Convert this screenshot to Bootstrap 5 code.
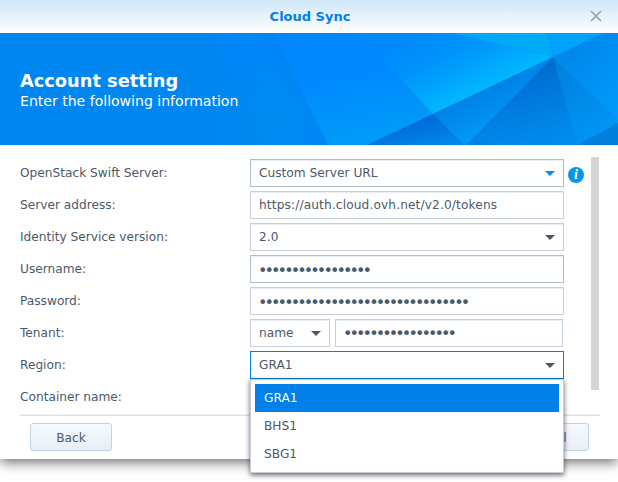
<!DOCTYPE html>
<html lang="en">
<head>
<meta charset="utf-8">
<meta name="viewport" content="width=device-width, initial-scale=1">
<title>Cloud Sync</title>
<link href="https://cdn.jsdelivr.net/npm/bootstrap@5.3.0/dist/css/bootstrap.min.css" rel="stylesheet">
<style>
body{font-family:"DejaVu Sans",Verdana,sans-serif;font-size:12.2px;color:#4b5a69;background:#fff;line-height:16px;height:482px}
.window{height:459px;box-shadow:0 3px 12px rgba(0,0,0,.6)}
.titlebar{height:33px;background:linear-gradient(#d5eaf8 15%,#fff);color:#0080ea;font-size:13px;padding-left:2px}
.title-close{right:16px;top:10px;width:12px;height:12px}
.banner{height:112px;background:#0086f1;padding:37px 20px 0}
.banner h1{font-size:17.8px;line-height:22px}
.banner p{font-size:14.05px;line-height:18px}
.form-area{height:270px;padding:14px 19px 0 20px}
.setting{height:28px;margin-bottom:4px}
.setting-label{width:230px;padding-top:6px;letter-spacing:-.01px}
.field{height:28px;width:314px;border:1px solid #c4d0dc;box-shadow:inset 0 1px 1px #e9edf1;padding:0 8px;line-height:25px}
.field-dark{border-color:#aebccb}
.field-open{border-color:#0080e8;box-shadow:none}
.field-kind{width:80px}
.field-tenant{width:228px;margin-left:5px}
.url{letter-spacing:.12px;line-height:27px}
.arrow{width:10px;height:5px}
.dots{display:block;font-size:16px;line-height:29px;letter-spacing:-2.9px;margin-left:-1px;white-space:nowrap}
.field-tenant .dots{line-height:28px}
.scroll-thumb{width:8px;height:233px;background:#d4d5d7;margin-top:-2px}
.info{width:16px;height:16px;margin:3px 0 0 4px}
.options{left:-1px;top:27px;width:314px;height:94px;border:1px solid #c4d0dc;background:#fff;padding:4px;box-shadow:0 2px 5px rgba(0,0,0,.6);z-index:5;line-height:28px}
.options li{height:28px;padding-left:9px}
.options .chosen{background:#0080e8;color:#fff}
.actions{height:44px;margin:0 18px 0 20px;padding:7px 11px 0 10px;border-top:1px solid #dddfe1;box-shadow:0 -1px 0 #f1f2f3}
.action{width:82px;height:28px;padding:2px 0 0;border:1px solid #c4d3e1;border-radius:3px;background:linear-gradient(#f6fafe,#e8eef6);font-size:12.2px;line-height:25px;color:#4b5a69}
.action-main{color:#0080d8;padding-right:4px}
</style>
<script src="https://cdn.jsdelivr.net/npm/bootstrap@5.3.0/dist/js/bootstrap.bundle.min.js"></script>
</head>
<body class="overflow-hidden">
<main class="window bg-white">
  <header class="titlebar position-relative d-flex align-items-center justify-content-center fw-bold">
    <span>Cloud Sync</span>
    <svg class="title-close position-absolute" viewBox="0 0 12 12"><path d="M1 1L11 11M11 1L1 11" stroke="#97a3ae" stroke-width="1.7" fill="none"/></svg>
  </header>
  <section class="banner position-relative text-white">
    <svg class="position-absolute top-0 start-0" width="618" height="112" viewBox="0 0 618 112">
      <defs>
        <linearGradient id="fade" gradientUnits="userSpaceOnUse" x1="200" y1="0" x2="300" y2="-50"><stop offset="0" stop-color="#0086f1"/><stop offset=".25" stop-color="#0087fb"/><stop offset=".45" stop-color="#0087fb"/><stop offset=".75" stop-color="#007eed"/></linearGradient>
        <radialGradient id="lower" gradientUnits="userSpaceOnUse" cx="275" cy="85" r="65"><stop offset="0" stop-color="#008df0"/><stop offset="1" stop-color="#008bee" stop-opacity="0"/></radialGradient>
        <linearGradient id="wide" x1="0" y1="0" x2=".25" y2="1"><stop offset="0" stop-color="#0087ff"/><stop offset=".5" stop-color="#008aff"/><stop offset="1" stop-color="#009af8"/></linearGradient>
        <linearGradient id="glow" gradientUnits="userSpaceOnUse" x1="425" y1="0" x2="458" y2="69"><stop offset="0" stop-color="#008afd"/><stop offset=".4" stop-color="#0094fb"/><stop offset="1" stop-color="#00b7ff"/></linearGradient>
        <linearGradient id="cyan" x1="0" x2="1"><stop offset="0" stop-color="#00a4ff"/><stop offset="1" stop-color="#00adf4"/></linearGradient>
        <linearGradient id="mid" gradientUnits="userSpaceOnUse" x1="490" y1="50" x2="510" y2="92"><stop offset="0" stop-color="#0080e6"/><stop offset="1" stop-color="#009af8"/></linearGradient>
        <linearGradient id="deep" x1=".2" y1="0" x2=".8" y2="1"><stop offset="0" stop-color="#005fd1"/><stop offset="1" stop-color="#0087ea"/></linearGradient>
        <linearGradient id="wedge" x1=".35" y1=".1" x2=".65" y2="1"><stop offset="0" stop-color="#0068cd"/><stop offset=".5" stop-color="#007bdd"/><stop offset="1" stop-color="#008ced"/></linearGradient>
        <linearGradient id="side" x1="0" y1="0" x2=".6" y2="1"><stop offset="0" stop-color="#007edc"/><stop offset="1" stop-color="#0096f5"/></linearGradient>
        <linearGradient id="edge" x1="0" y1="0" x2=".7" y2="1"><stop offset="0" stop-color="#0083e6"/><stop offset="1" stop-color="#0098fa"/></linearGradient>
      </defs>
      <path d="M190 0H274L329 112H190Z" fill="url(#fade)"/>
      <path d="M190 0H274L329 112H190Z" fill="url(#lower)"/>
      <path d="M273 0H362L433 81L367 112H328Z" fill="url(#wide)"/>
      <path d="M358 0H452L553 24L433 81Z" fill="url(#glow)"/>
      <path d="M452 0H547L553 24Z" fill="url(#cyan)"/>
      <path d="M547 0H604L553 24Z" fill="#00a2ff"/>
      <path d="M604 0H618V88L553 24Z" fill="url(#edge)"/>
      <path d="M553 24L618 87V91L577 112Z" fill="url(#side)"/>
      <path d="M577 112L618 90V112Z" fill="#007fdc"/>
      <path d="M553 24L577 112H466Z" fill="url(#wedge)"/>
      <path d="M433 81L553 24L466 112H464Z" fill="url(#mid)"/>
      <path d="M367 112L433 81L464 112Z" fill="url(#deep)"/>
    </svg>
    <div class="position-relative">
      <h1 class="fw-bold m-0">Account setting</h1>
      <p class="m-0">Enter the following information</p>
    </div>
  </section>
  <section class="form-area d-flex">
    <div class="flex-grow-1">
      <div class="setting d-flex"><label class="setting-label">OpenStack Swift Server:</label>
        <div class="field field-dark d-flex justify-content-between align-items-center"><span>Custom Server URL</span><svg class="arrow" viewBox="0 0 10 5"><path d="M0 0H10L5 5Z" fill="#0088f5"/></svg></div>
        <svg class="info align-self-center" viewBox="0 0 16 16"><circle cx="8" cy="8" r="8" fill="#0795f4"/><text x="8" y="12.3" text-anchor="middle" fill="#fff" font-family="Liberation Serif,serif" font-size="14" font-style="italic" font-weight="bold">i</text></svg></div>
      <div class="setting d-flex"><label class="setting-label">Server address:</label><div class="field"><span class="url d-block">https://auth.cloud.ovh.net/v2.0/tokens</span></div></div>
      <div class="setting d-flex"><label class="setting-label">Identity Service version:</label><div class="field d-flex justify-content-between align-items-center"><span>2.0</span><svg class="arrow" viewBox="0 0 10 5"><path d="M0 0H10L5 5Z" fill="#4b5a69"/></svg></div></div>
      <div class="setting d-flex"><label class="setting-label">Username:</label><div class="field field-dark"><span class="dots">•••••••••••••••••</span></div></div>
      <div class="setting d-flex"><label class="setting-label">Password:</label><div class="field"><span class="dots">••••••••••••••••••••••••••••••••</span></div></div>
      <div class="setting d-flex"><label class="setting-label">Tenant:</label><div class="field field-kind d-flex justify-content-between align-items-center"><span>name</span><svg class="arrow" viewBox="0 0 10 5"><path d="M0 0H10L5 5Z" fill="#4b5a69"/></svg></div><div class="field field-tenant"><span class="dots">•••••••••••••••••</span></div></div>
      <div class="setting d-flex"><label class="setting-label">Region:</label>
        <div class="field field-open position-relative d-flex justify-content-between align-items-center"><span>GRA1</span><svg class="arrow" viewBox="0 0 10 5"><path d="M0 0H10L5 5Z" fill="#4b5a69"/></svg>
          <ul class="options position-absolute list-unstyled m-0"><li class="chosen">GRA1</li><li>BHS1</li><li>SBG1</li></ul>
        </div></div>
      <div class="setting d-flex"><label class="setting-label">Container name:</label></div>
    </div>
    <div class="scroll-thumb flex-shrink-0"></div>
  </section>
  <footer class="actions d-flex justify-content-between">
    <button type="button" class="action">Back</button>
    <button type="button" class="action action-main">Cancel</button>
  </footer>
</main>
</body>
</html>
